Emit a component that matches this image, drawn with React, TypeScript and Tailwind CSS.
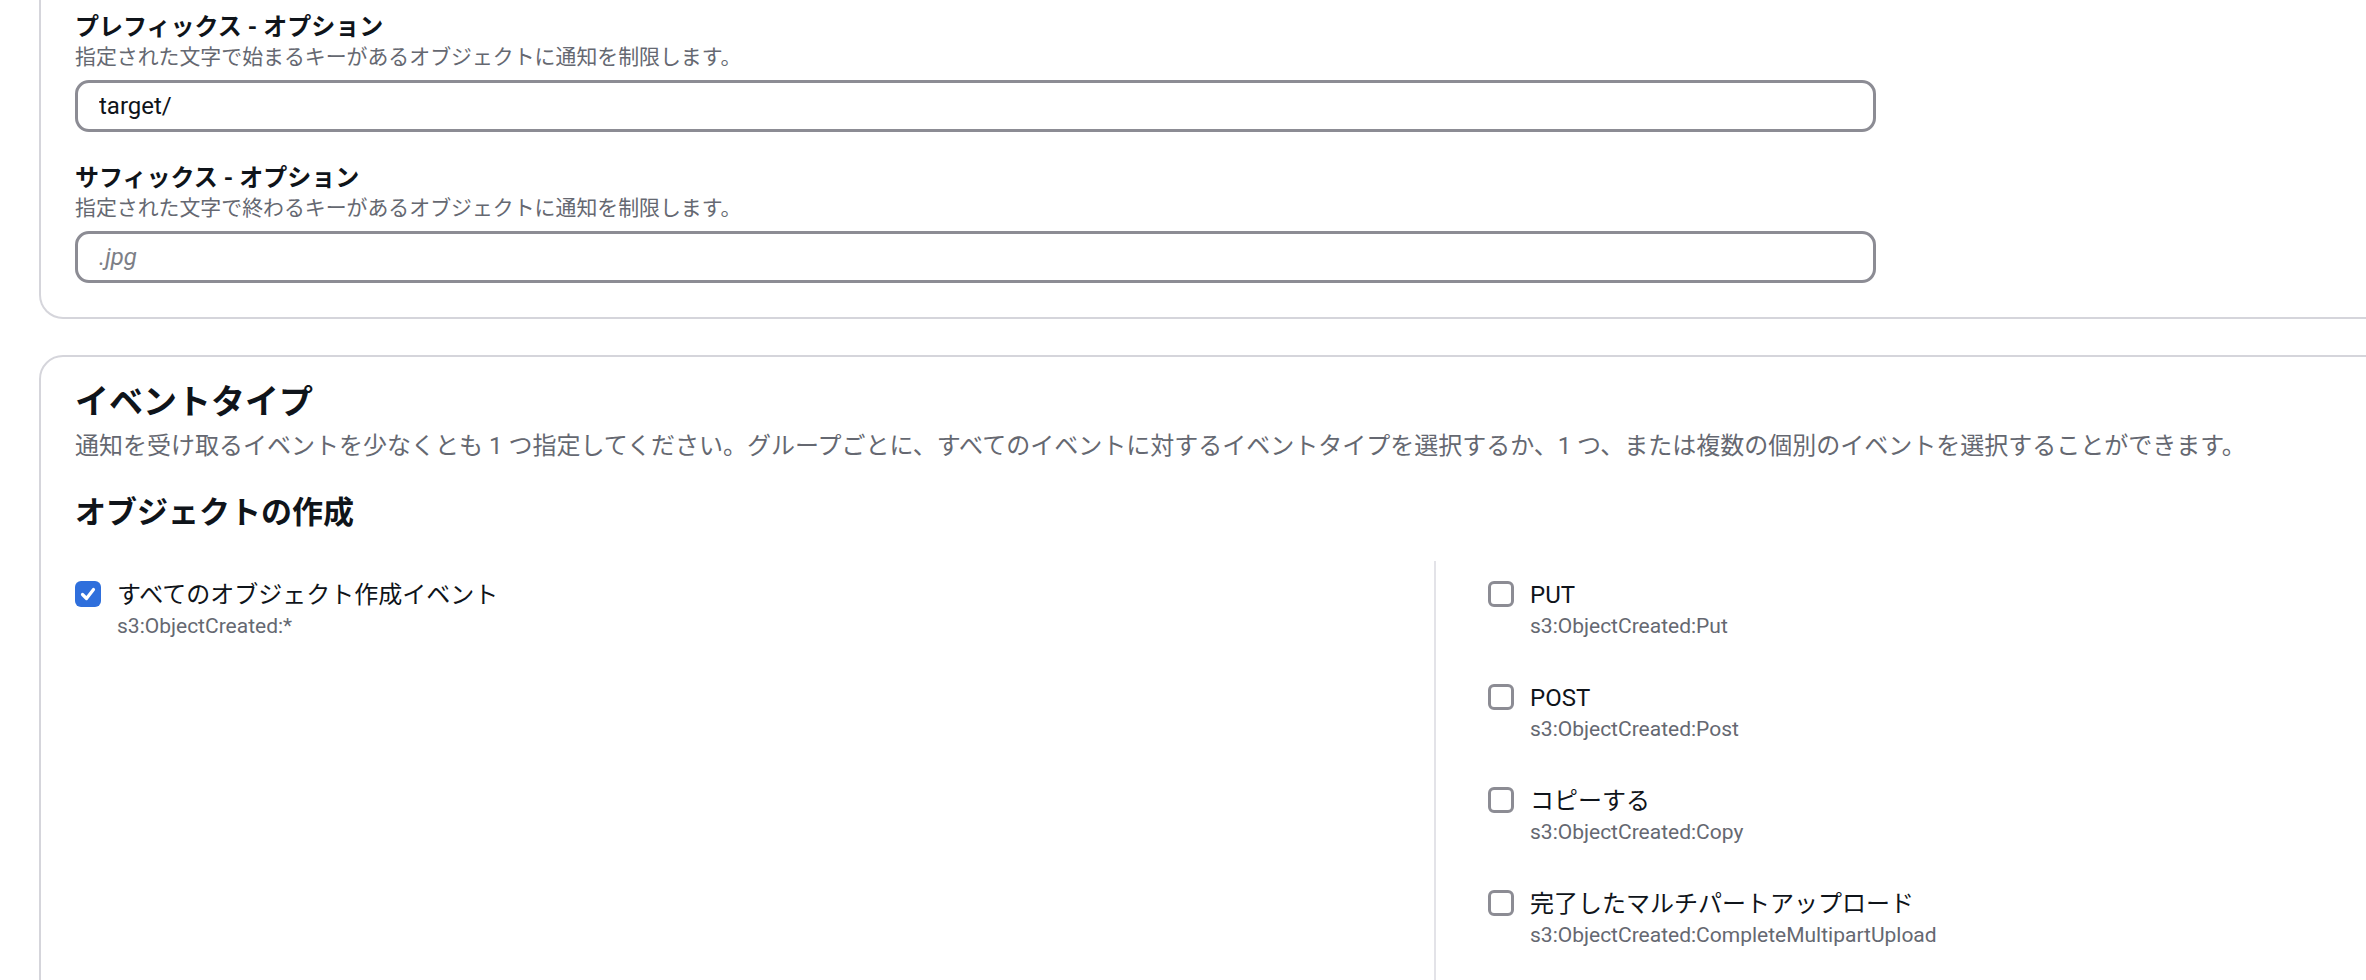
import React from "react";

function CheckBox({ checked }: { checked?: boolean }) {
  if (checked) {
    return (
      <span className="mt-[3px] flex h-[26px] w-[26px] shrink-0 items-center justify-center rounded-[6px] bg-[#2f6fdc]">
        <svg width="18" height="18" viewBox="0 0 18 18" fill="none">
          <path d="M3.5 9.5 L7.5 13.5 L14.5 4.5" stroke="#ffffff" strokeWidth="3.2" strokeLinecap="round" strokeLinejoin="round" />
        </svg>
      </span>
    );
  }
  return <span className="mt-[3px] block h-[26px] w-[26px] shrink-0 rounded-[6px] border-[3px] border-[#8c8c94] bg-white" />;
}

function CheckRow({ label, sub, checked }: { label: string; sub: string; checked?: boolean }) {
  return (
    <label className="flex gap-[16px]">
      <CheckBox checked={checked} />
      <span className="flex flex-col">
        <span className="text-[24px] leading-[34px] text-[#0f141a]">{label}</span>
        <span className="text-[21px] leading-[28px] text-[#656871]">{sub}</span>
      </span>
    </label>
  );
}

function Field({ label, desc, value, placeholder, first }: { label: string; desc: string; value?: string; placeholder?: string; first?: boolean }) {
  return (
    <div className={first ? "" : "mt-[29px]"}>
      <div className="text-[24px] font-bold leading-[34px] text-[#0f141a]">{label}</div>
      <div className="text-[20.9px] leading-[27px] text-[#656871]">{desc}</div>
      <input
        readOnly
        value={value ?? ""}
        placeholder={placeholder}
        className="mt-[9px] block h-[52px] w-[1801px] rounded-[14px] border-[3px] border-[#8c8c94] bg-white px-[21px] text-[24px] text-[#0f141a] outline-none placeholder:italic placeholder:text-[#7d7f87]"
      />
    </div>
  );
}

export default function App() {
  return (
    <div className="h-[980px] w-[2366px] overflow-hidden bg-white font-['Roboto','Noto_Sans_CJK_JP',sans-serif]">
      <div className="ml-[39px] w-[2400px] rounded-b-[24px] border-2 border-t-0 border-[#d5d5db] pb-[34px] pl-[34px] pt-[10px]">
        <Field first label="プレフィックス - オプション" desc="指定された文字で始まるキーがあるオブジェクトに通知を制限します。" value="target/" />
        <Field label="サフィックス - オプション" desc="指定された文字で終わるキーがあるオブジェクトに通知を制限します。" placeholder=".jpg" />
      </div>

      <div className="ml-[39px] mt-[36px] w-[2400px] rounded-[24px] border-2 border-[#d5d5db] pl-[34px] pt-[25px]">
        <h2 className="text-[34px] font-bold leading-[40px] text-[#0f141a]">イベントタイプ</h2>
        <p className="mt-[7px] text-[24px] leading-[34px] text-[#656871]">
          通知を受け取るイベントを少なくとも 1 つ指定してください。グループごとに、すべてのイベントに対するイベントタイプを選択するか、1 つ、または複数の個別のイベントを選択することができます。
        </p>
        <h3 className="mt-[31px] text-[31px] font-bold leading-[38px] text-[#0f141a]">オブジェクトの作成</h3>
        <div className="mt-[29px] flex">
          <div className="w-[1359px] pt-[17px]">
            <CheckRow checked label="すべてのオブジェクト作成イベント" sub="s3:ObjectCreated:*" />
          </div>
          <div className="w-[2px] self-stretch bg-[#e3e3e8]" />
          <div className="flex flex-col gap-[41px] pb-[60px] pl-[52px] pt-[17px]">
            <CheckRow label="PUT" sub="s3:ObjectCreated:Put" />
            <CheckRow label="POST" sub="s3:ObjectCreated:Post" />
            <CheckRow label="コピーする" sub="s3:ObjectCreated:Copy" />
            <CheckRow label="完了したマルチパートアップロード" sub="s3:ObjectCreated:CompleteMultipartUpload" />
          </div>
        </div>
      </div>
    </div>
  );
}
